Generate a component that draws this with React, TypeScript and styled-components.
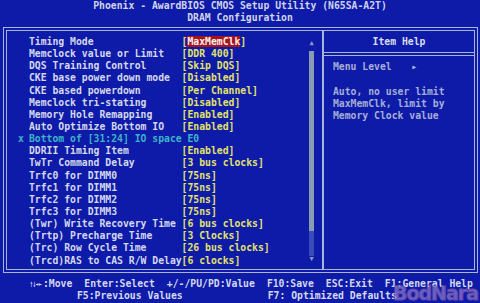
import React from "react";
import styled, { createGlobalStyle } from "styled-components";

const Global = createGlobalStyle`
  html, body { margin: 0; padding: 0; background: #0e1aa8; }
  #root { width: 480px; height: 303px; overflow: hidden; }
`;

const Screen = styled.div`
  position: relative;
  width: 480px;
  height: 303px;
  background: #0e1aa8;
  font-family: "DejaVu Sans Mono", "Liberation Mono", monospace;
  font-size: 9.75px;
  font-weight: bold;
  line-height: 12.15px;
  color: #d4d8ee;
  overflow: hidden;
`;

const Header = styled.div`
  height: 27px;
  text-align: center;
  color: #d0d4ea;
  white-space: pre;
`;

const Frame = styled.div`
  margin: 0 2px 0 3px;
  height: 246px;
  box-sizing: border-box;
  border: 4px double #aab4d6;
  display: grid;
  grid-template-columns: 1fr 152px;
`;

const LeftPanel = styled.div`
  display: flex;
  padding: 4px 7px 0 0;
`;

const List = styled.div`
  flex: 1;
  padding-top: 1px;
`;

const Row = styled.div`
  display: grid;
  grid-template-columns: 22px 26ch 1fr;
  height: 12.15px;
  white-space: pre;
`;

const Marker = styled.span`
  padding-left: 11px;
  color: #3cb4c8;
`;

const Label = styled.span<{ $dim?: boolean }>`
  color: ${(p) => (p.$dim ? "#3cb4c8" : "#d4d8ee")};
`;

const Value = styled.span`
  color: #e2e26a;
`;

const Selected = styled.span`
  background: #a8141c;
  color: #f4f0f0;
`;

const ScrollBar = styled.div`
  width: 7px;
  display: flex;
  flex-direction: column;
  align-items: center;
  padding-top: 5px;
`;

const Arrow = styled.div`
  font-size: 7px;
  line-height: 7px;
  color: #8a9ab8;
`;

const Thumb = styled.div`
  width: 5px;
  height: 180px;
  margin-top: 4px;
  background: #8a9cb4;
`;

const Track = styled.div`
  width: 5px;
  height: 25px;
  background: #3a4ab8;
`;

const HelpPanel = styled.div`
  border-left: 2px solid #aab4d6;
  display: flex;
  flex-direction: column;
`;

const HelpTitle = styled.div`
  height: 25px;
  padding-top: 4.5px;
  box-sizing: border-box;
  text-align: center;
  color: #d8dcf0;
  border-bottom: 4px double #aab4d6;
`;

const HelpBody = styled.div`
  padding: 5px 0 0 9px;
  color: #a6aed6;
  white-space: pre;
`;

const HelpGap = styled.div`
  height: 12.5px;
`;

const Tri = styled.span`
  font-size: 10px;
  margin-left: 2px;
`;

const Footer = styled.div`
  padding-top: 5px;
  color: #d4d8ee;
  white-space: pre;
`;

const FooterLine = styled.div<{ $indent: number }>`
  display: flex;
  padding-left: ${(p) => p.$indent}px;
  height: 12px;
`;

const Key = styled.span<{ $gap?: number }>`
  margin-right: ${(p) => p.$gap ?? 12}px;
`;

const Arrows = styled.span`
  display: inline-block;
  width: 12px;
  margin-right: 1px;
`;

const ArrowGlyphs = styled.span`
  display: inline-block;
  transform: scaleX(0.5);
  transform-origin: left center;
`;

const Watermark = styled.div`
  position: absolute;
  right: 2px;
  bottom: 0px;
  font-family: "DejaVu Sans", "Liberation Sans", sans-serif;
  font-weight: bold;
  font-size: 19px;
  line-height: 20px;
  letter-spacing: -1px;
  color: rgba(190, 170, 230, 0.5);
  -webkit-text-stroke: 1px #6a4aa8;
`;

type Item = { label: string; value?: string; selected?: boolean; sub?: boolean };

const items: Item[] = [
  { label: "Timing Mode", value: "MaxMemClk", selected: true },
  { label: "Memclock value or Limit", value: "DDR 400" },
  { label: "DQS Training Control", value: "Skip DQS" },
  { label: "CKE base power down mode", value: "Disabled" },
  { label: "CKE based powerdown", value: "Per Channel" },
  { label: "Memclock tri-stating", value: "Disabled" },
  { label: "Memory Hole Remapping", value: "Enabled" },
  { label: "Auto Optimize Bottom IO", value: "Enabled" },
  { label: "Bottom of [31:24] IO space E0", sub: true },
  { label: "DDRII Timing Item", value: "Enabled" },
  { label: "TwTr Command Delay", value: "3 bus clocks" },
  { label: "Trfc0 for DIMM0", value: "75ns" },
  { label: "Trfc1 for DIMM1", value: "75ns" },
  { label: "Trfc2 for DIMM2", value: "75ns" },
  { label: "Trfc3 for DIMM3", value: "75ns" },
  { label: "(Twr) Write Recovery Time", value: "6 bus clocks" },
  { label: "(Trtp) Precharge Time", value: "3 Clocks" },
  { label: "(Trc) Row Cycle Time", value: "26 bus clocks" },
  { label: "(Trcd)RAS to CAS R/W Delay", value: "6 clocks" },
];

export default function App() {
  return (
    <Screen>
      <Global />
      <Header>
        {"Phoenix - AwardBIOS CMOS Setup Utility (N65SA-A2T)"}
        <br />
        {"DRAM Configuration"}
      </Header>
      <Frame>
        <LeftPanel>
          <List>
            {items.map((it) => (
              <Row key={it.label}>
                <Marker>{it.sub ? "x" : ""}</Marker>
                <Label $dim={it.sub}>{it.label}</Label>
                {it.value ? (
                  <Value>
                    [{it.selected ? <Selected>{it.value}</Selected> : it.value}]
                  </Value>
                ) : (
                  <span />
                )}
              </Row>
            ))}
          </List>
          <ScrollBar>
            <Arrow>▲</Arrow>
            <Thumb />
            <Track />
            <Arrow>▼</Arrow>
          </ScrollBar>
        </LeftPanel>
        <HelpPanel>
          <HelpTitle>Item Help</HelpTitle>
          <HelpBody>
            {"Menu Level   "}
            <Tri>▸</Tri>
            <HelpGap />
            {"Auto, no user limit"}
            <br />
            {"MaxMemClk, limit by"}
            <br />
            {"Memory Clock value"}
          </HelpBody>
        </HelpPanel>
      </Frame>
      <Footer>
        <FooterLine $indent={30}>
          <Arrows>
            <ArrowGlyphs>↑↓→←</ArrowGlyphs>
          </Arrows>
          <Key>:Move</Key>
          <Key>Enter:Select</Key>
          <Key>+/-/PU/PD:Value</Key>
          <Key>F10:Save</Key>
          <Key>ESC:Exit</Key>
          <Key $gap={0}>F1:General Help</Key>
        </FooterLine>
        <FooterLine $indent={77}>
          <Key $gap={85}>F5:Previous Values</Key>
          <Key $gap={0}>F7: Optimized Defaults</Key>
        </FooterLine>
      </Footer>
      <Watermark>BodNara</Watermark>
    </Screen>
  );
}
